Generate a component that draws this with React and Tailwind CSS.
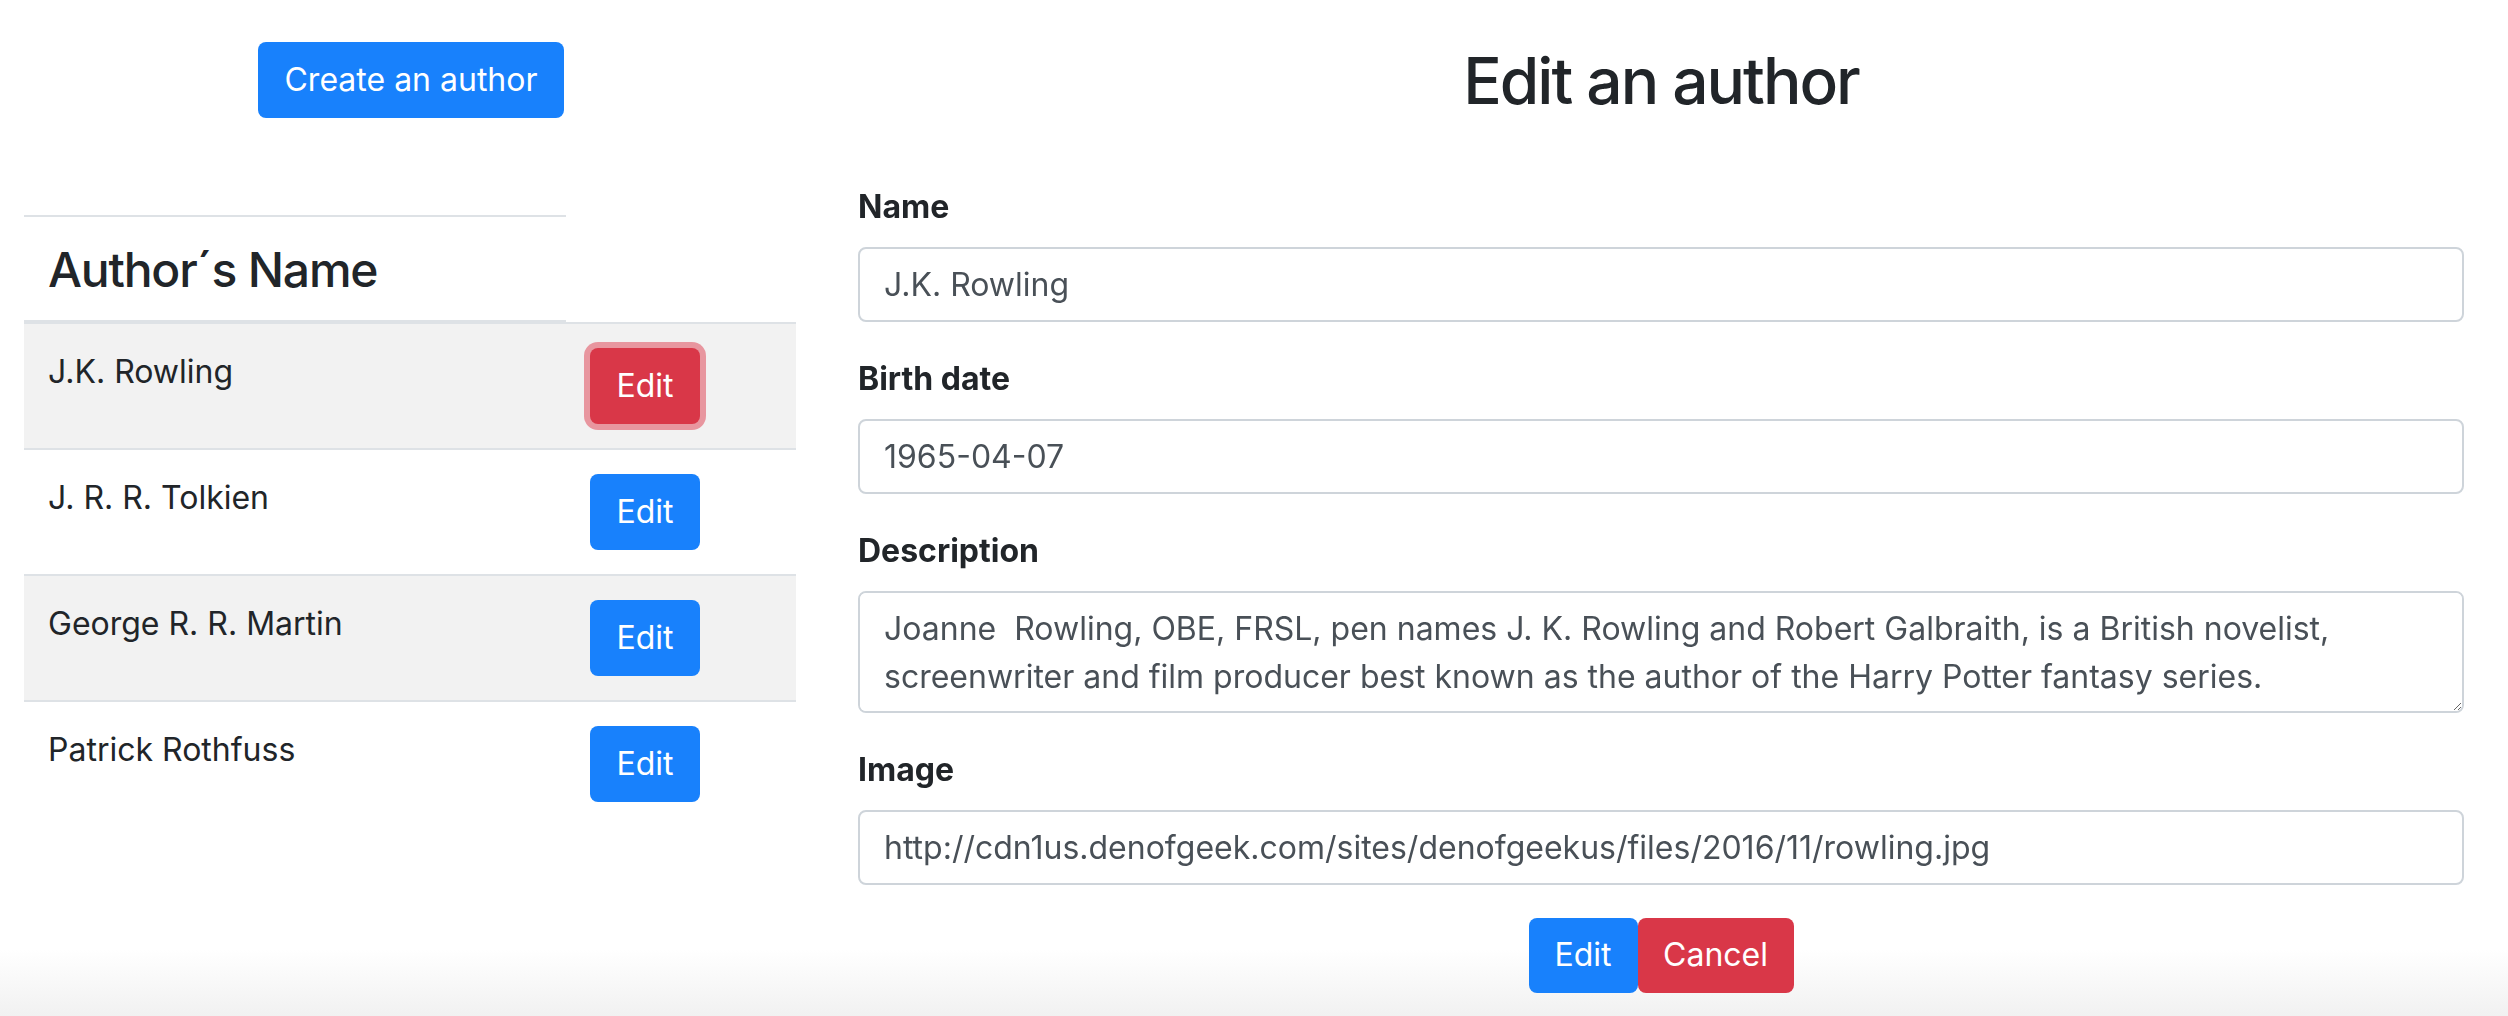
import React from "react";

const authors = ["J.K. Rowling", "J. R. R. Tolkien", "George R. R. Martin", "Patrick Rothfuss"];

function EditBtn({ active }) {
  if (active) {
    return (
      <button className="w-[110px] h-[76px] rounded-[8px] bg-[#d93748] text-white text-[32px] leading-[48px] shadow-[0_0_0_6px_#e8969f]">
        Edit
      </button>
    );
  }
  return (
    <button className="w-[110px] h-[76px] rounded-[8px] bg-[#1881fc] text-white text-[32px] leading-[48px]">
      Edit
    </button>
  );
}

function Field({ label, children }) {
  return (
    <div className="mb-[33px]">
      <label className="block font-bold text-[32px] leading-[48px] text-[#212529] mb-[16px]">{label}</label>
      {children}
    </div>
  );
}

const inputCls =
  "block w-full h-[75px] border-2 border-[#ced4da] rounded-[8px] px-[24px] text-[32px] leading-[48px] text-[#495057] bg-white outline-none";

const rowCls = [
  "flex h-[124px] bg-[#f2f2f2]",
  "flex h-[126px] border-t-2 border-[#dee2e6]",
  "flex h-[126px] border-t-2 border-[#dee2e6] bg-[#f2f2f2]",
  "flex h-[126px] border-t-2 border-[#dee2e6]",
];

export default function App() {
  return (
    <div
      className="w-[2508px] h-[1016px] flex text-[#212529] bg-[linear-gradient(to_bottom,#ffffff_950px,#f1f1f1_1016px)] overflow-hidden"
      style={{ fontFamily: "Inter, 'Noto Sans', sans-serif" }}
    >
      {/* Left column */}
      <div className="w-[820px] px-[24px] flex flex-col">
        <div className="flex justify-center mt-[42px] pl-[2px]">
          <button className="w-[306px] h-[76px] rounded-[8px] bg-[#1881fc] text-white text-[32px] leading-[48px]">
            Create an author
          </button>
        </div>
        <div className="mt-[97px] w-[772px]">
          {/* header */}
          <div className="flex items-end">
            <div className="w-[542px] h-[109px] border-t-2 border-b-4 border-[#dee2e6] pt-[24px] pl-[24px]">
              <div className="text-[48px] leading-[1.2] font-medium tracking-[-1.2px]">Author´s Name</div>
            </div>
            <div className="w-[230px] border-b-2 border-[#dee2e6]"></div>
          </div>
          {authors.map((a, i) => (
            <div key={a} className={rowCls[i]}>
              <div className="w-[542px] p-[24px] text-[32px] leading-[48px]">{a}</div>
              <div className="w-[230px] p-[24px]">
                <EditBtn active={i === 0} />
              </div>
            </div>
          ))}
        </div>
      </div>

      {/* Right column */}
      <div className="flex-1 pl-[38px] pr-[44px]">
        <h2 className="mt-[43px] mb-[63px] text-center text-[64px] leading-[1.2] font-medium tracking-[-2px]">
          Edit an author
        </h2>
        <Field label="Name">
          <input className={inputCls} defaultValue="J.K. Rowling" />
        </Field>
        <Field label="Birth date">
          <input className={inputCls} defaultValue="1965-04-07" />
        </Field>
        <Field label="Description">
          <textarea
            className="block w-full h-[122px] border-2 border-[#ced4da] rounded-[8px] px-[24px] py-[12px] text-[32px] leading-[48px] text-[#495057] bg-white outline-none"
            defaultValue={
              "Joanne  Rowling, OBE, FRSL, pen names J. K. Rowling and Robert Galbraith, is a British novelist, screenwriter and film producer best known as the author of the Harry Potter fantasy series."
            }
          />
        </Field>
        <Field label="Image">
          <input
            className={inputCls}
            defaultValue="http://cdn1us.denofgeek.com/sites/denofgeekus/files/2016/11/rowling.jpg"
          />
        </Field>
        <div className="flex justify-center">
          <button className="w-[109px] h-[75px] rounded-[8px] bg-[#1881fc] text-white text-[32px] leading-[48px]">
            Edit
          </button>
          <button className="w-[156px] h-[75px] rounded-[8px] bg-[#d93748] text-white text-[32px] leading-[48px]">
            Cancel
          </button>
        </div>
      </div>
    </div>
  );
}
